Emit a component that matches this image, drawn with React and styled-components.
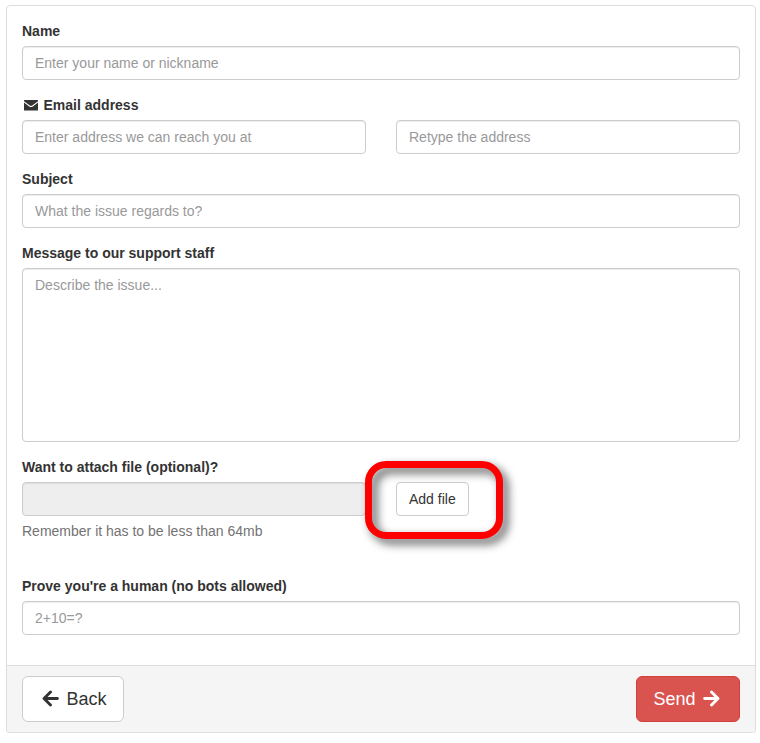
import React from "react";
import styled, { createGlobalStyle } from "styled-components";

const GlobalStyle = createGlobalStyle`
  *, *::before, *::after {
    box-sizing: border-box;
  }

  body {
    margin: 0;
    background: #fff;
    color: #333;
    font-family: "Liberation Sans", Arial, sans-serif;
    font-size: 14px;
    line-height: 20px;
  }
`;

const Panel = styled.form`
  width: 750px;
  margin: 5px 0 0 6px;
  background: #fff;
  border: 1px solid #ddd;
  border-radius: 4px;
  box-shadow: 0 1px 1px rgba(0, 0, 0, 0.05);
`;

const PanelBody = styled.div`
  padding: 15px;
`;

const PanelFooter = styled.div`
  display: flex;
  justify-content: space-between;
  padding: 10px 15px;
  background: #f5f5f5;
  border-top: 1px solid #ddd;
  border-radius: 0 0 3px 3px;
`;

const FormGroup = styled.div`
  margin-bottom: ${props => props.$space || 15}px;
`;

const Label = styled.label`
  display: flex;
  align-items: center;
  gap: 4px;
  margin-bottom: 5px;
  font-weight: bold;
`;

const Columns = styled.div`
  display: grid;
  grid-template-columns: 1fr 1fr;
  gap: 30px;
`;

const Input = styled.input`
  display: block;
  width: 100%;
  height: ${props => props.$height || 34}px;
  padding: 6px 12px;
  color: #555;
  background: #fff;
  border: 1px solid #ccc;
  border-radius: 4px;
  box-shadow: inset 0 1px 1px rgba(0, 0, 0, 0.075);
  font: inherit;
  outline: none;
  resize: none;

  &::placeholder {
    color: #999;
    opacity: 1;
  }

  &:disabled {
    background: #eee;
  }
`;

const HelpText = styled.p`
  margin: 5px 0 0;
  color: #737373;
`;

const Button = styled.button`
  padding: 6px 12px;
  color: ${props => (props.$danger ? "#fff" : "#333")};
  background: ${props => (props.$danger ? "#d9534f" : "#fff")};
  border: 1px solid ${props => (props.$danger ? "#d43f3a" : "#ccc")};
  border-radius: 4px;
  font: inherit;
`;

const LargeButton = styled(Button)`
  display: flex;
  align-items: center;
  gap: 5px;
  height: 46px;
  padding: 10px 16px;
  border-radius: 6px;
  font-size: 18px;
  line-height: 24px;
`;

// fixed width box, so that labels line up whatever the icon
const Icon = styled.span`
  display: flex;
  justify-content: center;
  width: 1.25em;
`;

const ArrowSvg = styled.svg`
  width: 17px;
  height: 17px;
  margin-bottom: 2px;
  fill: none;
  stroke: currentColor;
  stroke-width: 2.7;
  stroke-linecap: round;
  stroke-linejoin: round;
  transform: ${props => (props.$right ? "scaleX(-1)" : "none")};
`;

const FileAction = styled.div`
  position: relative;
  justify-self: start;
`;

const Highlight = styled.div`
  position: absolute;
  top: -21px;
  left: -31px;
  width: 138px;
  height: 78px;
  border: 7px solid #f00;
  border-radius: 21px;
  filter: drop-shadow(5px 5px 5px rgba(0, 0, 0, 0.65));
  pointer-events: none;
`;

const Arrow = ({ right }) => (
  <Icon>
    <ArrowSvg viewBox="0 0 16 16" $right={right}>
      <path d="M8 1.8L1.9 8L8 14.2M2.2 8H14.5" />
    </ArrowSvg>
  </Icon>
);

const Envelope = () => (
  <Icon>
    <svg width="14" height="11" viewBox="0 0 14 11" fill="#333">
      <path d="M.5 0H13.5Q14 0 14 .5V1.2L8.2 5.5Q7 6.4 5.8 5.5L0 1.2V.5Q0 0 .5 0Z" />
      <path d="M0 2.5L5.2 6.4Q7 7.7 8.8 6.4L14 2.5V10Q14 10.6 13.4 10.6H.6Q0 10.6 0 10Z" />
    </svg>
  </Icon>
);

export default function App() {
  return (
    <>
      <GlobalStyle />
      <Panel onSubmit={e => e.preventDefault()}>
        <PanelBody>
          <FormGroup>
            <Label htmlFor="name">Name</Label>
            <Input id="name" placeholder="Enter your name or nickname" />
          </FormGroup>
          <FormGroup>
            <Label htmlFor="email">
              <Envelope />
              Email address
            </Label>
            <Columns>
              <Input id="email" placeholder="Enter address we can reach you at" />
              <Input placeholder="Retype the address" />
            </Columns>
          </FormGroup>
          <FormGroup>
            <Label htmlFor="subject">Subject</Label>
            <Input id="subject" placeholder="What the issue regards to?" />
          </FormGroup>
          <FormGroup>
            <Label htmlFor="message">Message to our support staff</Label>
            <Input
              as="textarea"
              id="message"
              $height={174}
              placeholder="Describe the issue..."
            />
          </FormGroup>
          <FormGroup $space={35}>
            <Label htmlFor="file">Want to attach file (optional)?</Label>
            <Columns>
              <Input id="file" disabled />
              <FileAction>
                <Button type="button">Add file</Button>
                <Highlight />
              </FileAction>
            </Columns>
            <HelpText>Remember it has to be less than 64mb</HelpText>
          </FormGroup>
          <FormGroup>
            <Label htmlFor="human">Prove you're a human (no bots allowed)</Label>
            <Input id="human" placeholder="2+10=?" />
          </FormGroup>
        </PanelBody>
        <PanelFooter>
          <LargeButton type="button">
            <Arrow />
            Back
          </LargeButton>
          <LargeButton $danger>
            Send
            <Arrow right />
          </LargeButton>
        </PanelFooter>
      </Panel>
    </>
  );
}
